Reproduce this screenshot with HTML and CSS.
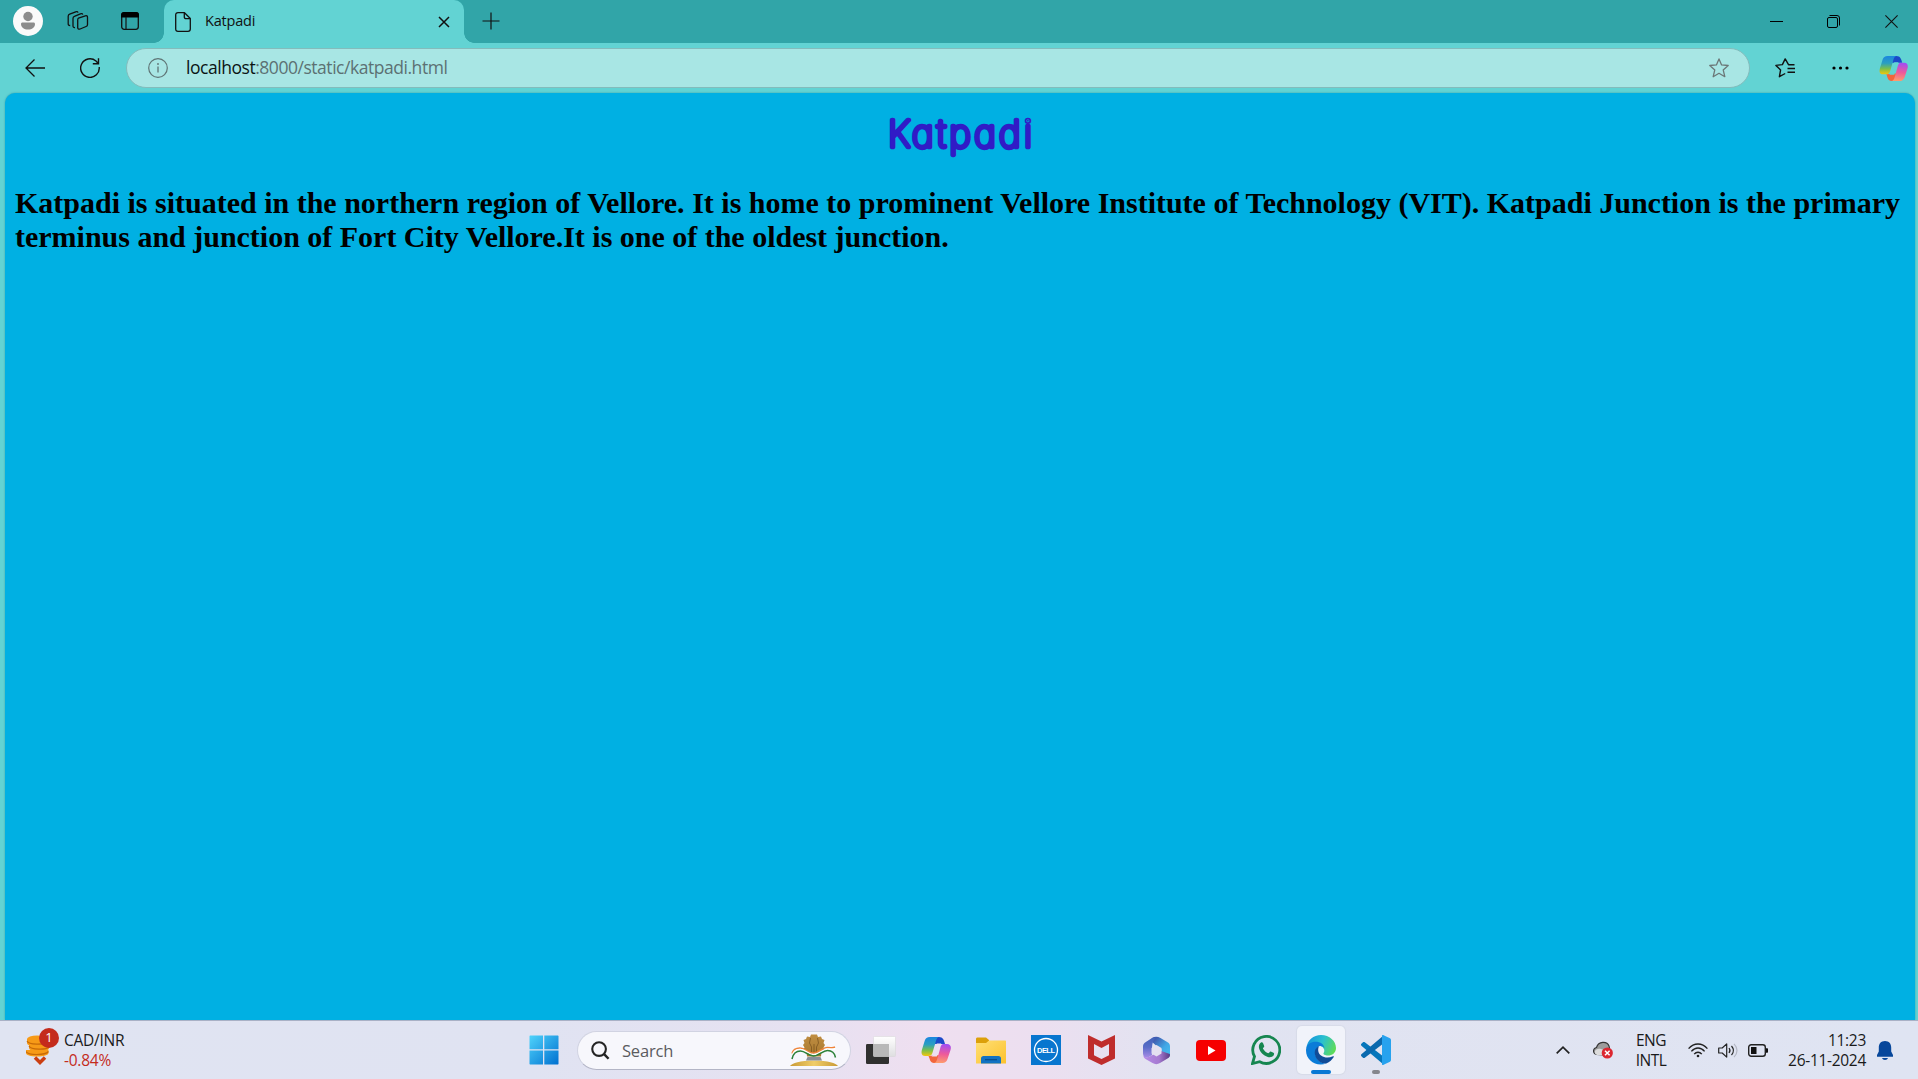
FILE: index.html
```html
<!DOCTYPE html>
<html lang="en">
<head>
<meta charset="utf-8">
<title>Katpadi</title>
<link rel="stylesheet" href="styles.css">
</head>
<body>
<svg class="defs" width="0" height="0" aria-hidden="true">
  <defs>
    <linearGradient id="cpA" x1="0" y1="0" x2="0" y2="1"><stop offset="0" stop-color="#1a86e0"/><stop offset=".4" stop-color="#2b9fc0"/><stop offset=".7" stop-color="#7bbf4a"/><stop offset="1" stop-color="#f4c60b"/></linearGradient>
    <linearGradient id="cpB" x1=".3" y1="0" x2=".2" y2="1"><stop offset="0" stop-color="#a44df0"/><stop offset=".5" stop-color="#ee5a9a"/><stop offset="1" stop-color="#ffa06a"/></linearGradient>
    <linearGradient id="win" x1="0" y1="0" x2="1" y2="1"><stop offset="0" stop-color="#4fd3fb"/><stop offset="1" stop-color="#0070d0"/></linearGradient>
    <linearGradient id="fold" x1="0" y1="0" x2="1" y2="1"><stop offset="0" stop-color="#ffdf75"/><stop offset="1" stop-color="#fcc22d"/></linearGradient>
    <linearGradient id="edgeTop" x1="0" y1=".3" x2="1" y2=".6"><stop offset="0" stop-color="#1494dc"/><stop offset=".5" stop-color="#2bc0cf"/><stop offset="1" stop-color="#5fdc55"/></linearGradient>
    <linearGradient id="m3" x1="0" y1="0" x2="1" y2="1"><stop offset="0" stop-color="#3f3f9c"/><stop offset=".6" stop-color="#41a8e6"/><stop offset="1" stop-color="#48c0f0"/></linearGradient>
    <linearGradient id="m4" x1="0" y1="0" x2="0" y2="1"><stop offset="0" stop-color="#3f62b8"/><stop offset=".5" stop-color="#5a6cc8"/><stop offset="1" stop-color="#a78be6"/></linearGradient>
    <linearGradient id="m5" x1="0" y1="0" x2="1" y2="0"><stop offset="0" stop-color="#b68be8"/><stop offset=".6" stop-color="#a57ad0"/><stop offset="1" stop-color="#5b3a84"/></linearGradient>
    <linearGradient id="glass" x1="0" y1="0" x2="0" y2="1"><stop offset="0" stop-color="#fff"/><stop offset="1" stop-color="#dedee0"/></linearGradient>
    <linearGradient id="gold" x1="0" y1="0" x2="0" y2="1"><stop offset="0" stop-color="#c08e42"/><stop offset="1" stop-color="#a8782e"/></linearGradient>
    <linearGradient id="mound" x1="0" y1="0" x2="1" y2="0"><stop offset="0" stop-color="#c99a35"/><stop offset=".5" stop-color="#f0cd69"/><stop offset="1" stop-color="#c99a35"/></linearGradient>
    <symbol id="copilot" viewBox="0 0 30 28">
      <path d="M18 1h-2c-3 0-3 4-4 7h12c-1-4-2-7-6-7z" fill="#1b49c9"/>
      <path d="M7.500 20c1.500 3 1.500 7 5.500 7h3c2.500 0 3-4 4-8z" fill="#f2663c"/>
      <path d="M9 1h9.500c-2.500 0-3.200 2.500-4 5.500l-2.800 9.500c-.8 3-2 4-4.500 4H4c-3.500 0-4-3-3-6.500l2.800-9C4.500 2.500 6 1 9 1z" fill="url(#cpA)"/>
      <path d="M22.500 8H26c3.500 0 4.500 3 3.500 6l-2.800 8.500C25.500 26 24 27 21 27h-8.500c2.300 0 3.200-2 4-5l2.500-9c.8-3.500 1.500-5 3.500-5z" fill="url(#cpB)"/>
      <path d="M15.800 7.500h4.500c-1 1-1.500 2.500-2 4.500l-2.500 8.500H10.500c1.300-1 1.800-2.500 2.300-4z" fill="currentColor"/>
    </symbol>
  </defs>
</svg>

<header class="tabstrip">
  <svg class="avatar" viewBox="0 0 30 30"><circle cx="15" cy="15" r="15" fill="#fafafa"/><circle cx="15" cy="10.500" r="4.700" fill="#8c8c8c"/><path d="M8 18c0-1 .7-1.500 1.500-1.500h11c.9 0 1.500.6 1.500 1.500 0 3.500-3 5.500-7 5.500s-7-2-7-5.500z" fill="#8c8c8c"/></svg>
  <svg class="collections" viewBox="0 0 22 22" fill="none" stroke="#111" stroke-width="1.300" stroke-linejoin="round"><path d="M11.500 8.200l6.800-2.400c1.300-.4 2.200.2 2.200 1.500v7.200c0 1-.5 1.700-1.400 2l-6 2.500c-1.400.5-2.400 0-2.400-1.500v-7.500c0-.9.2-1.500.8-1.800z"/><path d="M8 17.500c-1.200.2-2-.3-2-1.500V8.500c0-1 .4-1.700 1.400-2.100l6-2.600c1.100-.4 2.100-.1 2.300.8"/><path d="M3.200 15.500C2 15.600 1.200 15 1.200 14V6.300c0-1 .5-1.700 1.500-2.100l6-2.400c1-.4 2-.1 2.300.8"/></svg>
  <svg class="tabactions" viewBox="0 0 18 18"><rect x=".7" y=".7" width="16.600" height="16.600" rx="2.500" fill="none" stroke="#111" stroke-width="1.300"/><path d="M0 5.500V3a3 3 0 0 1 3-3h12a3 3 0 0 1 3 3v2.500z"/><path d="M5 5v12" stroke="#111" stroke-width="1.200"/></svg>
  <div class="tab">
    <svg class="page-icon" viewBox="0 0 16 20" fill="none" stroke="#111" stroke-width="1.300" stroke-linejoin="round"><path d="M3 .7h6.500l5.800 5.800V17c0 1.500-.8 2.300-2.300 2.300H3C1.500 19.300.7 18.500.7 17V3C.7 1.500 1.500.7 3 .7zM9.300.9V5c0 1 .7 1.700 1.700 1.700h4"/></svg>
    <span class="tab-title">Katpadi</span>
    <svg class="tab-close" viewBox="0 0 12 12" stroke="#111" stroke-width="1.500"><path d="M1 1l10 10M11 1L1 11"/></svg>
  </div>
  <svg class="new-tab" viewBox="0 0 18 18" stroke="#111" stroke-width="1.200"><path d="M9 .500v17M.500 9h17"/></svg>
  <div class="window-controls">
    <svg width="13" height="13" viewBox="0 0 13 13"><path d="M0 6.500h13" stroke="#000"/></svg>
    <svg width="13" height="13" viewBox="0 0 13 13" fill="none" stroke="#000"><rect x=".5" y="2.500" width="10" height="10" rx="1.500"/><path d="M2.500.500H10a2.500 2.500 0 0 1 2.500 2.500v7.500"/></svg>
    <svg width="13" height="13" viewBox="0 0 13 13" stroke="#111" stroke-width="1.100"><path d="M.4.400l12.200 12.200M12.600.400L.4 12.600"/></svg>
  </div>
</header>

<nav class="toolbar">
  <svg class="back" viewBox="0 0 20 20" fill="none" stroke="#111" stroke-width="1.300"><path d="M9.500 1.500L1 10l8.500 8.500M1 10h19"/></svg>
  <svg class="reload" viewBox="0 0 20 20" fill="none" stroke="#111" stroke-width="1.400"><path d="M19.200 9A9.300 9.300 0 1 1 16 3l2.300 2.500M18.500.300v5.400h-5.700"/></svg>
  <div class="address">
    <svg class="info" viewBox="0 0 20 20"><circle cx="10" cy="10" r="9.300" fill="none" stroke="#5f7475" stroke-width="1.200"/><path d="M10 8.500v6" stroke="#5f7475" stroke-width="1.300"/><circle cx="10" cy="6" r=".9" fill="#5f7475"/></svg>
    <span class="url"><b>localhost</b>:8000/static/katpadi.html</span>
    <svg class="star" viewBox="0 0 20 20" fill="none" stroke="#6b7777" stroke-width="1.300" stroke-linejoin="round"><path d="M10 .9l2.600 6 6.600.6-5 4.400 1.600 6.800L10 15.300l-5.800 3.400 1.600-6.800-5-4.400 6.600-.6z"/></svg>
  </div>
  <svg class="favorites" viewBox="0 0 21 20" fill="none" stroke="#111" stroke-width="1.400" stroke-linejoin="round"><path d="M19.500 6.700h-6L10.200.9 7.400 6.600l-6.500.8 4.700 4.500-1.200 6.800 5.800-3.200M12.500 10.500H20M12.500 14.300H20"/></svg>
  <svg class="more" viewBox="0 0 17 4"><circle cx="2" cy="2" r="1.600"/><circle cx="8.500" cy="2" r="1.600"/><circle cx="15" cy="2" r="1.600"/></svg>
  <svg class="sidebar-copilot" viewBox="0 0 29 27"><use href="#copilot" width="29" height="27"/></svg>
</nav>

<div class="frame">
  <main class="page">
    <h1><svg class="headline" viewBox="0 0 160 60"><text x="8" y="40.500" textLength="144">Katpadi</text></svg></h1>
    <h2>Katpadi is situated in the northern region of Vellore. It is home to prominent Vellore Institute of Technology (VIT). Katpadi Junction is the primary terminus and junction of Fort City Vellore.It is one of the oldest junction.</h2>
  </main>
</div>

<footer class="taskbar">
  <div class="widget">
    <svg class="coins" viewBox="0 0 34 38"><g fill="#f79a17"><ellipse cx="11" cy="11" rx="10" ry="3.500"/><path d="M1 11v4c0 2 4 3.500 10 3.500S21 17 21 15v-4z"/><path d="M3 16v4c0 2 4 3.500 10 3.500S23 22 23 20v-4z"/><path d="M0 22v3c0 2 4.500 3.600 11 3.600S22.500 27 22.500 25v-3z"/></g><g fill="none" stroke="#c76a08" stroke-width="1.200"><path d="M1 13c2 4 17 4 20 1M3 18c2 4 17 4 20 1M0 23.500c2 4 19 4 22.500 0"/></g><path d="M9 29.500l5 5 5-5" fill="none" stroke="#cb3e12" stroke-width="3.500"/></svg>
    <span class="badge">1</span>
    <div class="quote"><span>CAD/INR</span><span class="loss">-0.84%</span></div>
  </div>

  <div class="apps">
    <span class="app"><svg width="30" height="30" viewBox="0 0 30 30" fill="url(#win)"><path d="M1 .5h13v13.700H.5V1zM15.300.500H29l.5.500v13.200H15.300zM.5 15.500H14v14H1l-.5-.5zM15.300 15.500h14.200V29l-.5.500H15.300z"/></svg></span>
    <div class="search">
      <svg class="lens" viewBox="0 0 20 20" fill="none" stroke="#242424" stroke-width="2.200"><circle cx="8.500" cy="8.500" r="7.200"/><path d="M13.500 13.500l5 5.200" stroke-width="2.600"/></svg>
      <span class="hint">Search</span>
      <svg class="emblem" viewBox="0 0 48 33"><path d="M0 32c2-3 10-5.500 24-5.500S46 29 48 32z" fill="url(#mound)"/><path d="M16 26.500l1.500-3.500h13l1.500 3.500z" fill="#8b8f98"/><path d="M17 22.500l-.5-5L13 16l1.500-2.500L13 11l1.500-2L13.500 6 16 5l1-2.500 3 .5 1-2.500h6l1 2.500 3-.5L32 5l2.500 1-1 3 1.500 2-1.500 2.500L35 16l-3.500 1.500-.5 5z" fill="url(#gold)"/><path d="M20.500 4l-1 5 2 4v7M27.500 4l1 5-2 4v7M24 10v10" stroke="#7d5520" stroke-width=".8" fill="none"/><g fill="none" stroke-width="1.500"><path d="M2 19.500c1-4 4-5.500 8-5.500 6 0 7 5 13 5s9-5.500 14-5.500 5 1 8-.5" stroke="#ef8338"/><path d="M2.500 21c1-4 4-5.500 8-5.500 6 0 7 5 13 5s9-5.500 14-5.500 5 1 8-.5" stroke="#fff"/><path d="M2 25c1-5 4-8 8.500-8 5 0 7.500 5 13 5s9-5.500 14-5.500c4 0 7 2 8 7" stroke="#2c8139"/></g></svg>
    </div>
    <span class="app"><svg width="30" height="29" viewBox="0 0 30 29"><rect x="0" y="8" width="23" height="20" rx="1.200" fill="#30302f"/><rect x="7.500" y=".5" width="22" height="20" rx="1" fill="url(#glass)" stroke="#d5d5d5" stroke-width=".5"/><path d="M7.500 8H23v12.500H7.500z" fill="#b8b8b8"/></svg></span>
    <span class="app"><svg class="taskbar-copilot" width="30" height="28" viewBox="0 0 30 28"><use href="#copilot" width="30" height="28"/></svg></span>
    <span class="app"><svg width="30" height="27" viewBox="0 0 30 27"><path d="M0 2C0 1 .7.500 1.500.500H10L13 3v5H0z" fill="#dca00a"/><path d="M0 6h10l3-2.500h16c.6 0 1 .4 1 1V26.500H0z" fill="url(#fold)"/><path d="M5 26.500v-5c0-1.500 1-2.500 2.500-2.500h15c1.500 0 2.500 1 2.500 2.500v5z" fill="#1272c2"/><path d="M9 22.700h12" stroke="#064b8b" stroke-width="1.200"/></svg></span>
    <span class="app"><svg width="30" height="30" viewBox="0 0 30 30"><path d="M0 0h30v30H0z" fill="#0876cf"/><circle cx="15" cy="15" r="11.500" fill="none" stroke="#fff" stroke-width="1.300"/><text class="dell" x="6" y="17.700" textLength="18">DELL</text></svg></span>
    <span class="app"><svg width="27" height="30" viewBox="0 0 27 30"><path d="M0 0l13.500 6.500L27 0v23.500L13.500 30 0 23.500zM6 9v11.200l7.500 3.800 7.500-3.800V9l-7.500 4z" fill="#bf2d2c" fill-rule="evenodd"/></svg></span>
    <span class="app"><svg width="29" height="29" viewBox="0 0 29 29"><path d="M10 2c3-2 6-1.500 8.500 0L26 6.500c1.500 1 2 2.200 2 4V19c0 2-2 3-4 2l-4.500-2.800V13L14 9.500 9 5z" fill="url(#m3)"/><path d="M14.500.900C10.500 4 10 9 10 14v5L7 21c-2.500 1.500-6 .5-6-3.500v-7c0-2 1-3.300 2.500-4.200L10 2z" fill="url(#m4)"/><path d="M1.200 19.500c2 3 5 2 7 .8l6-3.300 5-2 8.700 3c.3 2.500-.5 3.500-2.400 4.500L18 27c-2.500 1.500-5 1.500-7.500 0l-7-4c-1.300-.9-2-2-2.300-3.500z" fill="url(#m5)"/><path d="M14.500 9l5 3v5.500l-5 3-5-3V12z" fill="#e4e0f1"/></svg></span>
    <span class="app"><svg width="30" height="21" viewBox="0 0 30 21"><rect width="30" height="21" rx="4" fill="#f60000"/><path d="M12 6l7.500 4.500L12 15z" fill="#fff"/></svg></span>
    <span class="app"><svg width="30" height="30" viewBox="0 0 30 30"><path d="M1.500 28.500l2-7A13.500 13.500 0 1 1 8.700 26.700z" fill="none" stroke="#168650" stroke-width="2.800"/><path d="M10 7.500c.8-.4 1.600-.2 2 .6l1.200 2.800c.3.900-1.300 2-1.300 2.500 1.300 2.300 3 3.900 5.300 4.800.7 0 1.600-2 2.500-1.800l2.800 1.300c.8.400.7 1.300.3 2.200-.9 2-3.500 2.700-6 2C12.300 20.500 9 17 8 13c-.4-2 .3-4.500 2-5.500z" fill="#168650"/></svg></span>
    <span class="app active"><svg width="30" height="30" viewBox="0 0 30 30"><path d="M.3 13C1.500 5 7.500 0 15 0c8.500 0 15 6 15 13 0 5-4 7.500-8 7.500-3 0-5-1.200-4.500-2.300 2.300-3-.2-7.200-5-7.700C8 9.500 2.500 9.500.3 13z" fill="url(#edgeTop)"/><path d="M.1 14C1 9 5 6.800 9.500 6.800c5 0 8.600 2.700 9 6.500-1-1.600-2.700-2.500-4.500-2.300C9 12 7 22 14 26.500c2 1.500 4.500 2.300 6.500 2C10 32.500-1 25 .1 14z" fill="#0b7cd8"/><path d="M13 11.300c-3.700 1.300-5 5-3.800 9.200 1.300 4.800 6 8.300 11 8 3.500-1.500 6-4 7.600-6.500.3-.7-.3-1-.8-.7-6.500 3-13.500.5-14.700-5-.4-2 .1-3.700.7-5z" fill="#114c98"/></svg></span>
    <span class="app running"><svg width="30" height="30" viewBox="0 0 30 30"><path d="M.4 10.700c-.6-.6-.6-1.300 0-1.900L2 7.300c.5-.5 1.200-.5 1.800 0L23 22l-.5 7.500z" fill="#0676bb"/><path d="M.4 19.300c-.6.600-.6 1.300 0 1.900L2 22.700c.5.500 1.200.5 1.800 0L23 8 22.500.5z" fill="#0a69ae"/><path d="M22 .1l7 3.200c.6.300 1 .9 1 1.600v20.200c0 .7-.4 1.300-1 1.600l-7 3.200c-.6.200-1 0-1-1V1c0-.9.400-1.200 1-.9z" fill="#27a2ee"/></svg></span>
  </div>

  <div class="tray">
    <svg class="chevron" viewBox="0 0 14 8" fill="none" stroke="#222" stroke-width="1.700"><path d="M.7 7.300L7 1.200l6.300 6.100"/></svg>
    <svg class="cloud" viewBox="0 0 20 18"><path d="M3.500 13.500C-.5 12.500-.5 7.500 3.500 6.500 5.500 0 14-.2 16 5l1 5-6 4z" fill="#9c9c9c" stroke="#363636" stroke-width="1.200"/><path d="M2.500 13C0 10 4 6.500 8 8l6 2-5 4H4z" fill="#dcdcdc"/><circle cx="14.300" cy="12" r="5.600" fill="#dc2630"/><path d="M12 9.700l4.600 4.600M16.600 9.700L12 14.300" stroke="#fff" stroke-width="1.500"/></svg>
    <div class="lang"><span>ENG</span><span>INTL</span></div>
    <svg class="wifi" viewBox="0 0 20 15" fill="none" stroke="#222" stroke-width="1.400"><path d="M.6 5.600C6-.6 14-.6 19.400 5.600M3.400 8.400c4-4.600 9.200-4.600 13.200 0M6.200 11.100c2.200-2.500 5.400-2.500 7.600 0"/><circle cx="10" cy="13" r="1.300" fill="#222" stroke="none"/></svg>
    <svg class="speaker" viewBox="0 0 20 15" fill="none" stroke="#222" stroke-width="1.200"><path d="M.7 5h3.500L8.700.900v13.200L4.200 10H.7z" stroke-linejoin="round"/><path d="M11 5c1.200 1.500 1.200 3.500 0 5M13.500 3c2.300 2.700 2.300 6.300 0 9"/><path d="M16 .800c4 4 4 9.400 0 13.400" stroke="#b5b8c4"/></svg>
    <svg class="battery" viewBox="0 0 20 13"><rect x=".7" y=".7" width="16.600" height="11.600" rx="2.500" fill="none" stroke="#222" stroke-width="1.400"/><path d="M3 3h5.500v7H3zM18 4.300h1c.7 0 1 .3 1 1v2.400c0 .7-.3 1-1 1h-1z" fill="#111"/></svg>
    <div class="clock"><span>11:23</span><span class="date">26-11-2024</span></div>
    <svg class="bell" viewBox="0 0 16 19"><path d="M8 0c4 0 6.200 2.800 6.200 6.500v4L16 14v1.700H0V14l1.800-3.500v-4C1.800 2.800 4 0 8 0zM5 17h6c-.5 1.300-1.500 2-3 2s-2.500-.7-3-2z" fill="#07479b"/></svg>
  </div>
</footer>
</body>
</html>
```
FILE: styles.css
```css
* { box-sizing: border-box; }
html, body { height: 100%; }
body {
  margin: 0;
  display: flex;
  flex-direction: column;
  overflow: hidden;
  background: #62d3d3;
  font-family: "Open Sans", "Noto Sans", sans-serif;
}
svg { flex: none; display: block; }
.defs { position: absolute; }

/* Tab strip */
.tabstrip { display: flex; align-items: center; height: 43px; flex: none; background: #31a5a8; padding-left: 13px; }
.avatar { width: 30px; height: 30px; margin-bottom: 1px; }
.collections { width: 22px; height: 22px; margin-left: 24px; margin-bottom: 1px; }
.tabactions { width: 18px; height: 18px; margin-left: 32px; margin-bottom: 1px; }
.tab {
  position: relative;
  display: flex;
  align-items: center;
  width: 300px;
  height: 43px;
  margin-left: 25px;
  padding: 0 14px 0 11px;
  background: #62d3d3;
  border-radius: 10px 10px 0 0;
}
.tab::before, .tab::after {
  content: "";
  position: absolute;
  bottom: 0;
  width: 10px;
  height: 10px;
}
.tab::before { left: -10px; background: radial-gradient(circle at 0 0, #31a5a8 9.500px, #62d3d3 10px); }
.tab::after { right: -10px; background: radial-gradient(circle at 100% 0, #31a5a8 9.500px, #62d3d3 10px); }
.page-icon { width: 16px; height: 20px; }
.tab-title { margin-left: 14px; padding-bottom: 2px; font-size: 14.500px; letter-spacing: -.2px; color: #111; }
.tab-close { width: 12px; height: 12px; margin-left: auto; }
.new-tab { width: 18px; height: 18px; margin-left: 18px; margin-bottom: 1px; }
.window-controls { display: flex; gap: 44px 45px; margin-left: auto; margin-right: 20px; }
.window-controls svg:nth-child(2) { margin-right: -1px; margin-left: -1px; }
.window-controls svg:last-child { margin-left: 1px; }

/* Address row */
.toolbar { display: flex; align-items: center; height: 50px; flex: none; padding-left: 25px; }
.back { width: 20px; height: 20px; }
.reload { width: 20px; height: 20px; margin-left: 35px; }
.address {
  display: flex;
  align-items: center;
  width: 1624px;
  height: 40px;
  margin-left: 25.500px;
  padding: 0 20px 0 21px;
  background: #a8e6e4;
  border: 1px solid #83bcbc;
  border-radius: 20px;
}
.info { width: 20px; height: 20px; }
.url { margin-left: 18.500px; padding-bottom: 2px; font-size: 17.500px; letter-spacing: -.46px; color: #5c7173; white-space: nowrap; }
.url b { font-weight: 400; color: #0b1414; }
.star { width: 20px; height: 20px; margin-left: auto; }
.favorites { width: 21px; height: 20px; margin-left: 25px; }
.more { width: 17px; height: 4px; margin-left: 36px; }
.sidebar-copilot { width: 29px; height: 27px; margin-left: 30px; color: #62d3d3; }

/* Web page */
.frame { flex: 1; padding: 0 3px 0 5px; min-height: 0; }
.page {
  height: 100%;
  padding: 13px 15px 0 10px;
  background: #00b0e3;
  border-radius: 10px 10px 0 0;
  box-shadow: 0 0 2px #3c9ba0;
}
.page h1 { display: flex; justify-content: center; margin: 0; }
.headline { width: 160px; height: 60px; margin-left: 5px; }
.headline text {
  font: 100 37px Inter, sans-serif;
  font-feature-settings: "cv11";
  fill: #311bc6;
  stroke: #311bc6;
  stroke-width: 4.700px;
  stroke-linejoin: round;
}
.page h2 {
  margin: 20px 0 0;
  font: bold 30px/34px "Liberation Serif", serif;
  letter-spacing: -.01px;
  color: #000;
  text-align: justify;
}

/* Taskbar */
.taskbar {
  display: grid;
  grid-template-columns: 520px 880px 1fr;
  height: 59px;
  flex: none;
  position: relative;
  border-top: 1px solid #a9b1c6;
  background: linear-gradient(90deg, #e0e4f2 0, #e0e3f2 530px, #e6e1f1 800px, #efdff0 930px, #ecdff0 1040px, #e1e3f1 1170px, #dfe4f2 100%);
}
.widget { display: flex; align-items: center; position: relative; padding-left: 26px; }
.coins { width: 34px; height: 38px; margin-top: -7px; }
.badge {
  position: absolute;
  left: 39px;
  top: 7px;
  width: 20px;
  height: 20px;
  border-radius: 50%;
  background: #c42b1c;
  color: #fff;
  font-size: 13px;
  line-height: 19px;
  text-align: center;
}
.quote { display: flex; flex-direction: column; margin-left: 4px; font-size: 15.500px; line-height: 20px; letter-spacing: -.25px; color: #1a1a1a; }
.loss { color: #c42b1c; }
.apps { display: flex; align-items: center; gap: 7px; }
.app { position: relative; display: flex; align-items: center; justify-content: center; width: 48px; height: 48px; flex: none; border-radius: 5px; }
.taskbar-copilot { color: #ecdff0; }
.active { background: #f1f3fa; box-shadow: 0 0 1px 1px #d7dbe8; }
.active::after, .running::after {
  content: "";
  position: absolute;
  bottom: 0;
  width: 20px;
  height: 4px;
  border-radius: 2px;
  background: #0878d4;
}
.running::after { width: 8px; background: #85868d; }
.dell { font: bold 7.500px "Liberation Sans", sans-serif; fill: #fff; }
.search {
  display: flex;
  align-items: center;
  width: 274px;
  height: 39px;
  flex: none;
  margin: 0 -1px 0 2px;
  padding: 0 12px 0 13px;
  border: 1px solid #d1d3e2;
  border-bottom-color: #b3b5c6;
  border-radius: 20px;
  background: #f7f7fc;
  font-size: 16.500px;
  letter-spacing: -.2px;
  color: #5b5b60;
}
.lens { width: 19px; height: 19px; margin-right: 12px; }
.emblem { width: 48px; height: 33px; margin-left: auto; }

.tray { display: flex; align-items: center; padding-left: 156px; font-size: 15.500px; line-height: 20px; color: #1a1a1a; letter-spacing: -.5px; }
.chevron { width: 14px; height: 8px; }
.cloud { width: 20px; height: 18px; margin-left: 23px; }
.lang { display: flex; flex-direction: column; align-items: center; width: 32px; margin-left: 22px; }
.wifi { width: 20px; height: 15px; margin-left: 21px; }
.speaker { width: 20px; height: 15px; margin-left: 10px; }
.battery { width: 20px; height: 13px; margin-left: 10px; }
.clock { display: flex; flex-direction: column; align-items: flex-end; width: 98px; letter-spacing: -.3px; }
.bell { width: 16px; height: 19px; margin-left: 11px; }
```
